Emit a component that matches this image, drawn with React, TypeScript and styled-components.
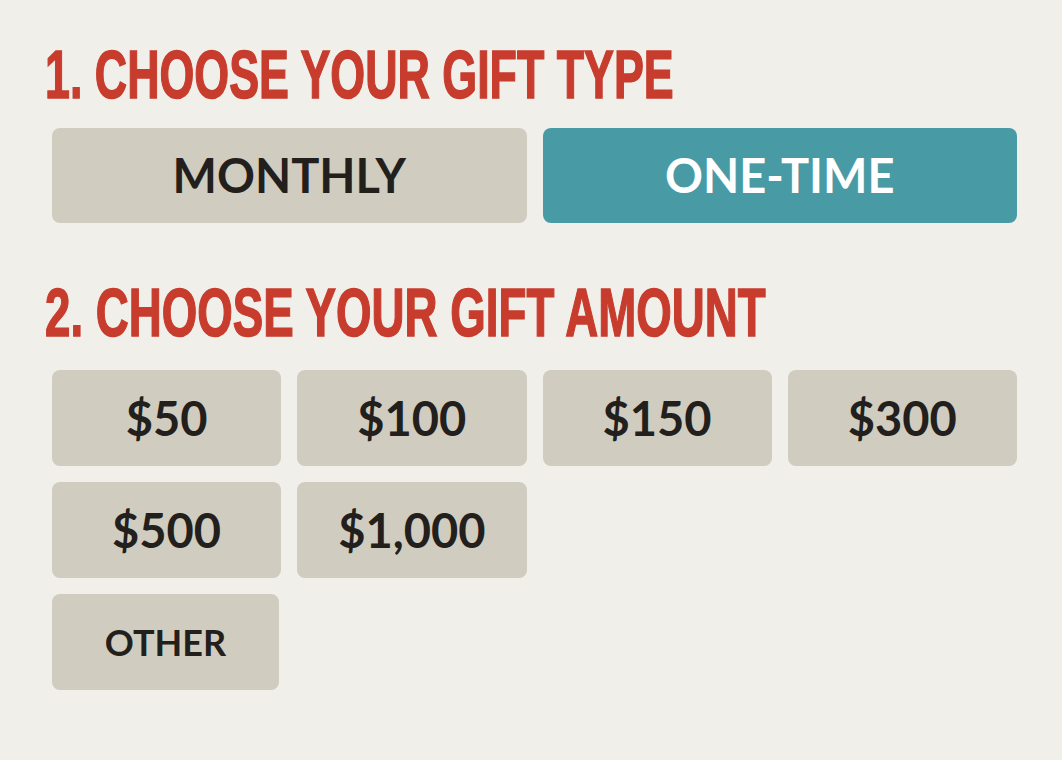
import React, { useState } from "react";
import styled, { createGlobalStyle } from "styled-components";

const GlobalStyle = createGlobalStyle`
  html, body {
    margin: 0;
    padding: 0;
    background: #f1efea;
  }
  body {
    overflow: hidden;
    font-family: Lato, "Noto Sans", sans-serif;
  }
`;

const Page = styled.div`
  box-sizing: border-box;
  width: 1062px;
  min-height: 760px;
  padding: 40px 45px 0 52px;
  background: #f1efea;
  overflow: hidden;
`;

const Heading = styled.h2<{ $gap: number; $scale: number }>`
  margin: ${(p) => p.$gap}px 0 0 -7px;
  width: max-content;
  white-space: nowrap;
  font-family: "Liberation Sans", Arial, sans-serif;
  font-weight: 700;
  font-size: 69px;
  line-height: 70px;
  height: 70px;
  color: #c73c2d;
  -webkit-text-stroke: 1.5px #c73c2d;
  transform: scaleX(${(p) => p.$scale});
  transform-origin: left center;
`;

const TypeRow = styled.div`
  margin-top: 18px;
  display: grid;
  grid-template-columns: 1fr 1fr;
  gap: 16px;
`;

const AmountGrid = styled.div`
  margin-top: 22px;
  display: grid;
  grid-template-columns: repeat(4, 1fr);
  grid-auto-rows: 96px;
  gap: 16px;
`;

const Choice = styled.button<{ $active?: boolean; $small?: boolean; $h?: number; $newRow?: boolean }>`
  box-sizing: border-box;
  height: ${(p) => p.$h ?? 96}px;
  border: none;
  border-radius: 8px;
  padding: 0;
  margin: 0;
  display: flex;
  align-items: center;
  justify-content: center;
  cursor: pointer;
  grid-column-start: ${(p) => (p.$newRow ? 1 : "auto")};
  width: ${(p) => (p.$newRow ? "227px" : "auto")};
  font-family: Lato, "Noto Sans", sans-serif;
  font-weight: 700;
  font-size: ${(p) => (p.$small ? 36 : 47)}px;
  line-height: 1;
  color: ${(p) => (p.$active ? "#ffffff" : "#221f1c")};
  background: ${(p) => (p.$active ? "#489ba5" : "#d1ccc0")};
`;

const amounts = ["$50", "$100", "$150", "$300", "$500", "$1,000"];

export default function App() {
  const [type, setType] = useState<"monthly" | "one-time">("one-time");
  const [amount, setAmount] = useState<string | null>(null);

  return (
    <Page>
      <GlobalStyle />
      <Heading $gap={0} $scale={0.649}>1. CHOOSE YOUR GIFT TYPE</Heading>
      <TypeRow>
        <Choice $h={95} $active={type === "monthly"} onClick={() => setType("monthly")}>
          MONTHLY
        </Choice>
        <Choice $h={95} $active={type === "one-time"} onClick={() => setType("one-time")}>
          ONE-TIME
        </Choice>
      </TypeRow>
      <Heading $gap={55} $scale={0.662}>2. CHOOSE YOUR GIFT AMOUNT</Heading>
      <AmountGrid>
        {amounts.map((a) => (
          <Choice key={a} $active={amount === a} onClick={() => setAmount(a)}>
            {a}
          </Choice>
        ))}
        <Choice $small $newRow $active={amount === "other"} onClick={() => setAmount("other")}>
          OTHER
        </Choice>
      </AmountGrid>
    </Page>
  );
}
